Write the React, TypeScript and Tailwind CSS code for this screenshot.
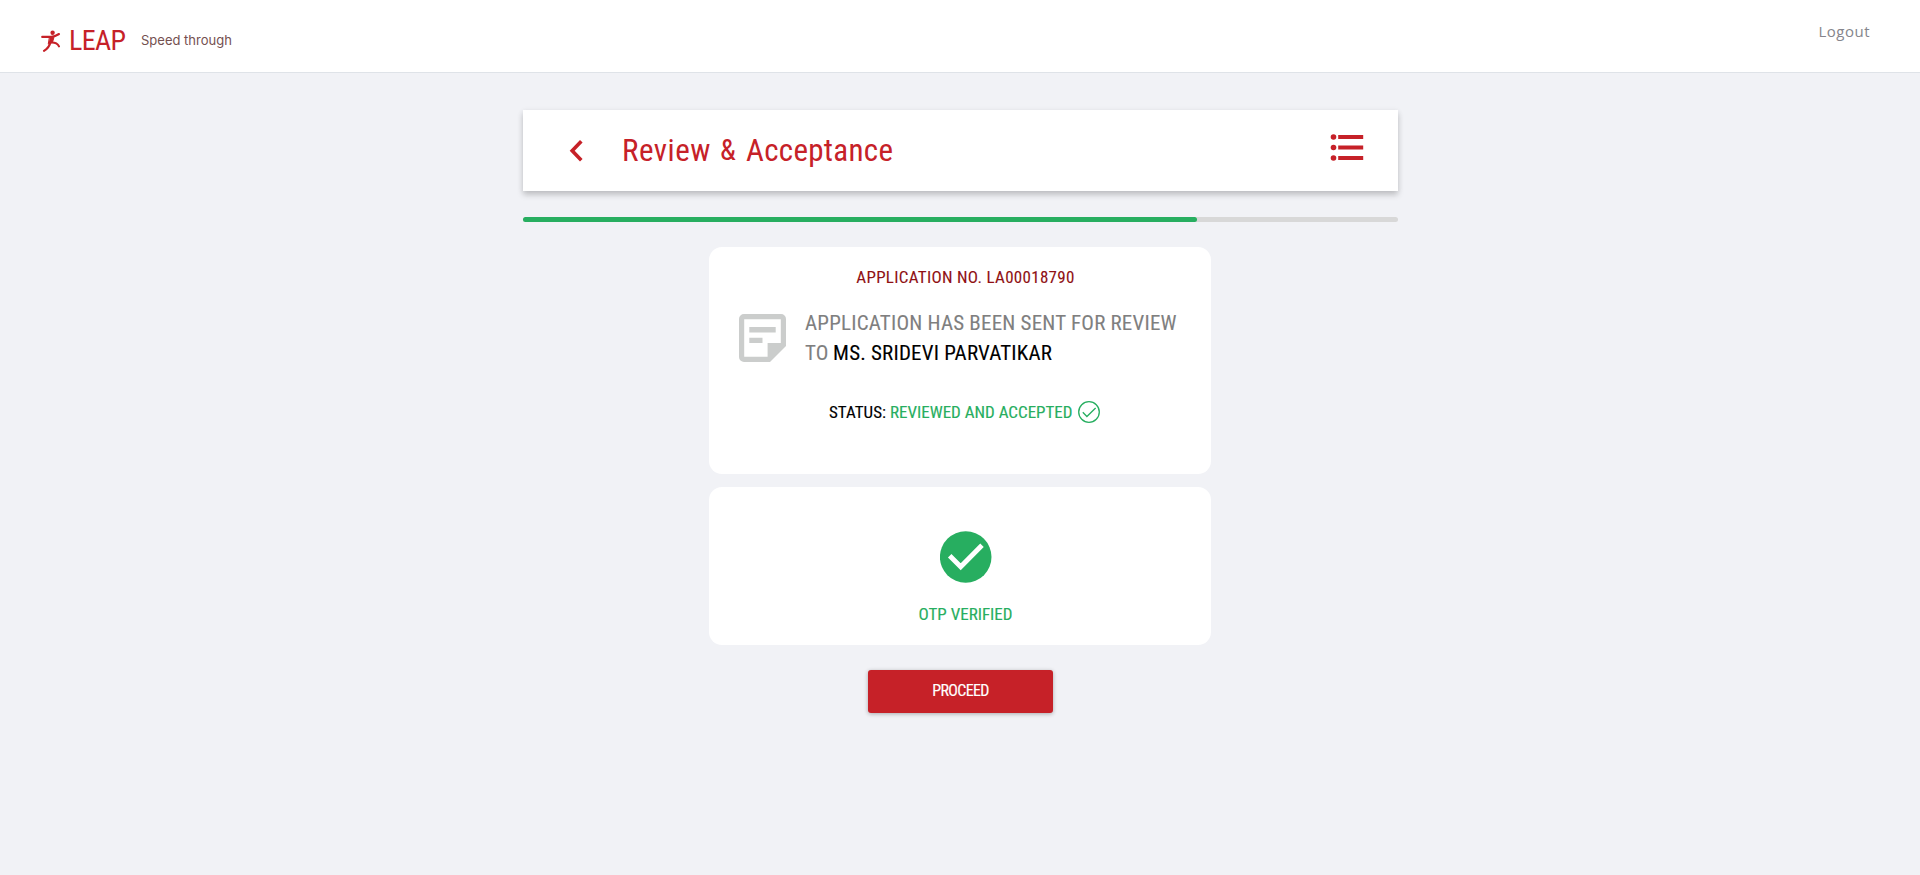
function Runner() {
  return (
    <svg className="mt-px ml-px h-[22px] w-5" viewBox="0 0 20 22" fill="none" stroke="#c62128" strokeLinecap="round" strokeLinejoin="round">
      <circle cx="11.6" cy="2.8" r="2.2" fill="#c62128" stroke="none" />
      <path d="M1.2 6.9H10.2Q13.8 6.6 18 4" strokeWidth="2.1" />
      <path d="M8.8 7 13 7.2 11.5 12.2 7.6 14Z" fill="#c62128" strokeWidth="1" />
      <path d="M9.4 12.6Q15.8 12 18 16.4" strokeWidth="2.1" />
      <path d="M9.6 11.5Q8.5 17.6 3 20.8" strokeWidth="2.1" />
    </svg>
  );
}

function Header() {
  return (
    <header className="flex h-[73px] justify-between border-b border-[#dfe3e8] bg-white pr-[50px] pl-10">
      <div className="flex h-20 items-center">
        <Runner />
        <span className="mt-[2px] ml-2 w-[59px] text-[28px] leading-none tracking-[-0.6px] text-[#c62128]">LEAP</span>
        <span className="ml-[13px] font-['Inter',sans-serif] text-[13px] leading-none text-[#74504f] [font-stretch:100%]">
          Speed through
        </span>
      </div>
      <a className="flex h-[63px] items-center font-['Open_Sans',sans-serif] text-[15px] leading-none tracking-[0.5px] text-[#85858c] [font-stretch:100%]">
        Logout
      </a>
    </header>
  );
}

function TitleBar() {
  return (
    <div className="flex h-[81px] bg-white pr-[34px] pl-[46px] text-[#c62128] shadow-[0_4px_6px_rgba(0,0,0,0.18),0_1px_6px_rgba(0,0,0,0.07)]">
      <svg className="mt-[29px] h-6 w-4" viewBox="0 0 16 24" fill="none" stroke="currentColor" strokeWidth="3.6">
        <path d="M12.3 2.3 3.2 11.8 12.3 21.2" />
      </svg>
      <h1 className="ml-[37px] flex h-[80px] items-center text-[31px] leading-none">
        <span className="w-[98px] tracking-[0.5px]">Review</span>
        <span className="w-[26px] text-[29px]">&amp;</span>
        <span className="tracking-[0.3px]">Acceptance</span>
      </h1>
      <svg className="mt-[23px] ml-auto h-7 w-[34px]" viewBox="0 0 34 28" fill="currentColor">
        <circle cx="3.5" cy="4" r="2.8" />
        <circle cx="3.5" cy="14.5" r="2.8" />
        <circle cx="3.5" cy="25" r="2.8" />
        <path d="M8.2 2.1h25v3.8h-25zM8.2 12.6h25v3.8h-25zM8.2 23.1h25v3.8h-25z" />
      </svg>
    </div>
  );
}

function NoteIcon() {
  return (
    <svg className="mt-[3px] h-12 w-[47px] shrink-0" viewBox="0 0 47 48">
      <path
        fill="#cbcdcc"
        fillRule="evenodd"
        d="M5 0H42a5 5 0 0 1 5 5V32L31 48H5a5 5 0 0 1-5-5V5a5 5 0 0 1 5-5ZM5.2 5.2V42.8H28.6V29H41.8V5.2ZM10.3 13.1H36.7V18.5H10.3ZM10.3 23.8H23.5V29.1H10.3Z"
      />
    </svg>
  );
}

function ReviewCard() {
  return (
    <section className="h-[227px] rounded-[13px] bg-white">
      <p className="flex h-[60px] items-center justify-center pl-[11px] text-[17px] leading-none tracking-[0.3px] text-[#8f1013] [-webkit-text-stroke:0.1px]">
        APPLICATION NO. LA00018790
      </p>
      <div className="flex pt-1 pl-[30px]">
        <NoteIcon />
        <p className="-mt-[3px] ml-[19px] text-[21px] leading-[30px] whitespace-nowrap text-[#7f7f7f] [-webkit-text-stroke:0.1px]">
          <span className="tracking-[0.21px]">APPLICATION HAS BEEN SENT FOR REVIEW</span>
          <br />
          TO <span className="tracking-[0.2px] text-black">MS. SRIDEVI PARVATIKAR</span>
        </p>
      </div>
      <p className="mt-[32px] flex h-[24px] items-center pl-[120px] text-[17px] leading-none text-black [-webkit-text-stroke:0.15px]">
        <span className="w-[61px]">STATUS:</span>
        <span className="w-[185px] whitespace-nowrap text-[#27ae60]">REVIEWED AND ACCEPTED</span>
        <svg className="ml-[3px] h-[22px] w-[22px]" viewBox="0 0 22 22" fill="none" stroke="#27ae60" strokeWidth="1.3">
          <circle cx="11" cy="11" r="10.3" />
          <path d="M4.8 11.3 8.9 15.5 17.6 7" />
        </svg>
      </p>
    </section>
  );
}

function OtpCard() {
  return (
    <section className="mt-[13px] flex h-[158px] flex-col items-center rounded-[13px] bg-white pt-[44px] pl-[11px]">
      <svg className="h-[52px] w-[52px]" viewBox="0 0 52 52">
        <circle cx="25.7" cy="26" r="25.8" fill="#27ae60" />
        <path d="M9.7 24.8 20.7 35.8 42 14.3" fill="none" stroke="#fff" strokeWidth="4.9" />
      </svg>
      <p className="mt-[21px] text-[17px] leading-5 text-[#27ae60] [-webkit-text-stroke:0.15px]">OTP VERIFIED</p>
    </section>
  );
}

export default function App() {
  return (
    <div className="min-h-[875px] bg-[#f1f2f6] font-['Roboto',sans-serif] [font-stretch:75%]">
      <Header />
      <main className="ml-[523px] w-[875px] pt-[37px]">
        <TitleBar />
        <div className="mt-[26px] h-[5px] rounded-full bg-[#d8d8d8]">
          <div className="h-full w-[674px] rounded-full bg-[#27ae60]" />
        </div>
        <div className="ml-[186px] w-[502px] pt-[25px]">
          <ReviewCard />
          <OtpCard />
          <button className="mt-[25px] ml-[159px] flex h-[43px] w-[185px] items-center justify-center rounded-[3px] bg-[#c62128] pb-px text-[16px] leading-none tracking-[-0.65px] text-white shadow-[0_1px_4px_rgba(0,0,0,0.3)] [-webkit-text-stroke:0.15px]">
            PROCEED
          </button>
        </div>
      </main>
    </div>
  );
}
